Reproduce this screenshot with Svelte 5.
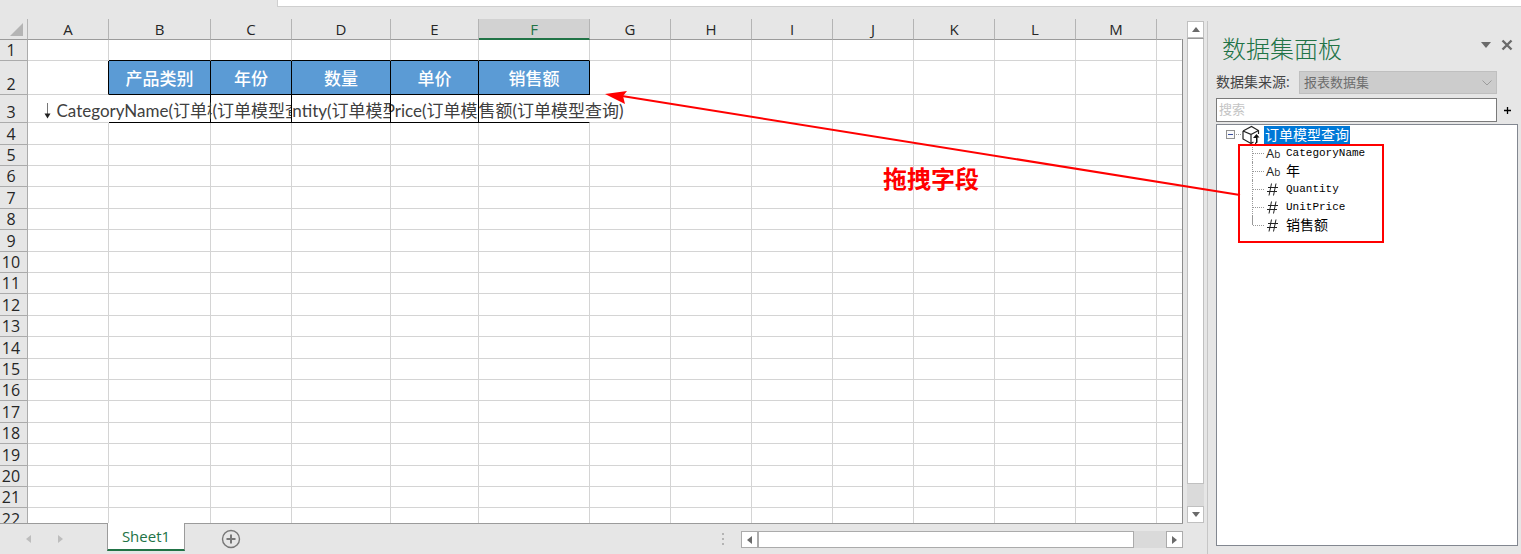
<!--
  App.svelte - Report designer: worksheet with the dataset panel docked on the right
-->
<script lang="ts">
  interface Column {
    name: string;
    width?: number;
  }

  interface Field {
    name: string;
    kind: "text" | "number";
  }

  const columns: Column[] = [
    { name: "A", width: 81 },
    { name: "B", width: 102 },
    { name: "C", width: 81 },
    { name: "D", width: 99 },
    { name: "E", width: 88 },
    { name: "F", width: 111 },
    { name: "G", width: 81 },
    { name: "H", width: 81 },
    { name: "I", width: 81 },
    { name: "J", width: 81 },
    { name: "K", width: 81 },
    { name: "L", width: 81 },
    { name: "M", width: 81 },
    { name: "" },
  ];

  const rowHeights = [
    21, 34, 28, 22, 21, 21, 22, 21, 22, 21, 21, 22, 21, 22, 21, 21, 22, 21, 22,
    21, 21, 22,
  ];

  const titles: Record<string, string> = {
    B: "产品类别",
    C: "年份",
    D: "数量",
    E: "单价",
    F: "销售额",
  };

  const bindings: Record<string, string> = {
    B: "CategoryName",
    C: "年",
    D: "Quantity",
    E: "UnitPrice",
    F: "销售额",
  };

  const fields: Field[] = [
    { name: "CategoryName", kind: "text" },
    { name: "年", kind: "text" },
    { name: "Quantity", kind: "number" },
    { name: "UnitPrice", kind: "number" },
    { name: "销售额", kind: "number" },
  ];

  const model = "订单模型查询";

  let selected = $state("F");
  let expanded = $state(true);
  let keyword = $state("");

  const visibleFields = $derived(
    fields.filter((f) => f.name.toLowerCase().includes(keyword.toLowerCase()))
  );
</script>

<div class="app">
  <div class="formula-bar"></div>

  <div class="body">
    <main class="workbook">
      <div class="sheet-area">
        <div class="sheet">
          <table>
            <colgroup>
              <col class="row-head-col" />
              {#each columns as col}
                <col style:width={col.width ? `${col.width}px` : "auto"} />
              {/each}
            </colgroup>
            <thead>
              <tr>
                <th class="corner">
                  <svg width="13" height="13" viewBox="0 0 13 13"><path d="M13 0V13H0Z" /></svg>
                </th>
                {#each columns as col}
                  <th
                    class:selected={col.name === selected}
                    class:rest={!col.name}
                    onclick={() => (selected = col.name || selected)}
                  >{col.name}</th>
                {/each}
              </tr>
            </thead>
            <tbody>
              {#each rowHeights as height, i}
                <tr class="row-{i + 1}" style:height="{height}px">
                  <th scope="row">{i + 1}</th>
                  {#each columns as col}
                    <td class="col-{col.name}" class:bound={col.name in titles}>
                      {#if i === 1 && titles[col.name]}
                        {titles[col.name]}
                      {:else if i === 2 && bindings[col.name]}
                        <div class="binding">
                          <svg width="9" height="18" viewBox="0 0 9 18"><path d="M4.500 1V13" /><path class="tip" d="M1.500 11.500H7.500L4.500 16.500Z" /></svg>
                          <span>{bindings[col.name]}({model})</span>
                        </div>
                      {/if}
                    </td>
                  {/each}
                </tr>
              {/each}
            </tbody>
          </table>
        </div>

        <div class="scroll-v">
          <button aria-label="向上滚动"><svg width="8" height="5" viewBox="0 0 8 5"><path d="M0 5L4 0L8 5Z" /></svg></button>
          <div class="thumb"></div>
          <button aria-label="向下滚动"><svg width="8" height="5" viewBox="0 0 8 5"><path d="M0 0L4 5L8 0Z" /></svg></button>
        </div>
      </div>

      <footer class="tab-bar">
        <div class="tab-nav">
          <button aria-label="上一个"><svg width="5" height="8" viewBox="0 0 5 8"><path d="M5 0V8L0 4Z" /></svg></button>
          <button aria-label="下一个"><svg width="5" height="8" viewBox="0 0 5 8"><path d="M0 0V8L5 4Z" /></svg></button>
        </div>
        <button class="tab">Sheet1</button>
        <button class="add-sheet" aria-label="新工作表">
          <svg width="20" height="20" viewBox="0 0 20 20"><circle cx="10" cy="10" r="8.500" /><path d="M10 5.500V14.500M5.500 10H14.500" /></svg>
        </button>
        <svg class="grip" width="4" height="12" viewBox="0 0 4 12"><path d="M1 0h2v2H1zM1 5h2v2H1zM1 10h2v2H1z" /></svg>
        <div class="scroll-h">
          <button aria-label="向左滚动"><svg width="5" height="8" viewBox="0 0 5 8"><path d="M5 0V8L0 4Z" /></svg></button>
          <div class="thumb"></div>
          <button aria-label="向右滚动"><svg width="5" height="8" viewBox="0 0 5 8"><path d="M0 0V8L5 4Z" /></svg></button>
        </div>
      </footer>
    </main>

    <aside class="panel">
      <header class="panel-header">
        <h1>数据集面板</h1>
        <button aria-label="选项"><svg width="10" height="6" viewBox="0 0 10 6"><path d="M0 0H10L5 6Z" fill="#6a6a6a" /></svg></button>
        <button aria-label="关闭"><svg width="12" height="12" viewBox="0 0 12 12"><path d="M1.500 1.500L10.500 10.500M10.500 1.500L1.500 10.500" stroke="#6a6a6a" stroke-width="2.400" /></svg></button>
      </header>

      <div class="source">
        <label for="source">数据集来源:</label>
        <div class="select-box">
          <select id="source" disabled>
            <option>报表数据集</option>
          </select>
          <svg width="10" height="6" viewBox="0 0 10 6"><path d="M0.500 0.500L5 5L9.500 0.500" /></svg>
        </div>
      </div>

      <div class="search">
        <input type="text" placeholder="搜索" aria-label="搜索" bind:value={keyword} />
        <button aria-label="添加"><svg width="7" height="7" viewBox="0 0 7 7"><path d="M3.500 0V7M0 3.500H7" stroke="#000" stroke-width="1.300" /></svg></button>
      </div>

      <div class="tree">
        <div class="tree-root">
          <button aria-label="展开或折叠" onclick={() => (expanded = !expanded)}>
            <svg width="9" height="9" viewBox="0 0 9 9">
              <rect x="0.500" y="0.500" width="8" height="8" fill="#fafafa" stroke="#919191" />
              <path d="M2 4.500H7" stroke="#3c50a0" />
              {#if !expanded}<path d="M4.500 2V7" stroke="#3c50a0" />{/if}
            </svg>
          </button>
          <span class="dots"></span>
          <svg class="cube" width="20" height="20" viewBox="0 0 20 20">
            <path d="M2 6L10.500 1.500L17.500 5.500V9M2 6V14L10 18.500V9.500L2 6M10 9.500L17.500 5.500M10 18.500L12.500 17" />
            <path class="arrow" d="M12 13L15.500 9L18.500 12.500H16.500V17.500L14 19.500V17.500H15V13Z" />
          </svg>
          <span class="root-name">{model}</span>
        </div>
        {#if expanded}
          <ul>
            {#each visibleFields as field}
              <li>
                {#if field.kind === "text"}
                  <span class="kind">A<small>b</small></span>
                {:else}
                  <svg class="kind" width="13" height="13" viewBox="0 0 13 13"><path d="M5.500 0.500L3 12.500M10 0.500L7.500 12.500M2 4.500H12M1 8.500H11" /></svg>
                {/if}
                <span class="field" class:latin={/^[A-Za-z]/.test(field.name)}>{field.name}</span>
              </li>
            {/each}
          </ul>
        {/if}
      </div>
    </aside>
  </div>

  <!-- Drag hint drawn over the sheet and the panel -->
  <svg class="hint">
    <rect x="1239" y="145" width="144" height="97" />
    <path d="M1240 195L622 96" />
    <path class="head" d="M605 94L627 91L623 96L625 104Z" />
  </svg>
  <strong class="hint-text">拖拽字段</strong>
</div>

<style>
  :global(body) {
    background: #e6e6e6;
  }

  .app {
    position: relative;
    display: flex;
    flex-direction: column;
    box-sizing: border-box;
    height: 100vh;
    min-height: 300px;
    overflow: hidden;
    background: #e6e6e6;
    color: #262626;
    font-family: "Open Sans", "Noto Sans CJK SC", sans-serif;
    font-size: 16px;
  }

  button {
    display: flex;
    align-items: center;
    justify-content: center;
    box-sizing: border-box;
    padding: 0;
    border: none;
    background: none;
    font: inherit;
  }

  .formula-bar {
    height: 6px;
    margin-left: 277px;
    background: #fff;
    border: solid #cfcfcf;
    border-width: 0 0 1px 1px;
    flex: none;
  }

  .body {
    display: flex;
    flex: 1;
    min-height: 0;
  }

  /* Worksheet */
  .workbook {
    display: flex;
    flex-direction: column;
    flex: 1;
    min-width: 0;
    padding-top: 12px;
  }

  .sheet-area {
    display: flex;
    flex: 1;
    min-height: 0;
    gap: 4px;
  }

  .sheet {
    flex: 1;
    min-width: 0;
    overflow: hidden;
    background: linear-gradient(#e6e6e6 20px, #8c8c8c 20px) right / 1px 100% no-repeat;
    padding-right: 1px;
  }

  table {
    width: 100%;
    table-layout: fixed;
    border-collapse: separate;
    border-spacing: 0;
  }

  .row-head-col {
    width: 28px;
  }

  th,
  td {
    box-sizing: border-box;
    padding: 0;
    line-height: 20px;
    white-space: nowrap;
  }

  th {
    font-weight: 400;
  }

  thead th {
    height: 21px;
    font-size: 15px;
    line-height: 18px;
    border-right: 1px solid #b4b4b4;
    border-bottom: 1px solid #9b9b9b;
    cursor: default;
  }

  thead th.rest {
    border-right-color: transparent;
  }

  thead th.selected {
    background: #d2d2d2;
    border-bottom: 2px solid #217346;
    color: #217346;
  }

  .corner svg {
    display: block;
    margin-left: 10px;
    fill: #b4b4b4;
  }

  tbody th {
    padding-right: 5px;
    vertical-align: bottom;
    border-right: 1px solid #ababab;
    border-bottom: 1px solid #ababab;
  }

  td {
    background: #fff;
    border-right: 1px solid #d4d4d4;
    border-bottom: 1px solid #d4d4d4;
    text-align: center;
  }

  td:last-child {
    border-right: none;
  }

  .row-1 .bound,
  .row-3 .bound {
    border-bottom-color: #000;
  }

  .row-2 .bound {
    padding-top: 2px;
    background: #5b9bd5;
    border-color: #000;
    color: #fff;
    font-weight: 500;
    font-size: 17px;
  }

  .row-2 .col-A {
    border-right-color: #000;
  }

  .row-3 .bound {
    position: relative;
    border-right-color: #000;
    overflow: hidden;
  }

  .row-3 .col-A,
  .row-3 .col-F {
    border-right-color: #fff;
  }

  /* Edge cells let their text run over the empty neighbour */
  .row-3 .col-B {
    overflow: visible;
    clip-path: inset(0 0 0 -100px);
  }

  .row-3 .col-F {
    overflow: visible;
    clip-path: inset(0 -100px 0 0);
  }

  .binding {
    display: flex;
    align-items: center;
    justify-content: center;
    gap: 4px;
    padding: 5px 0 0 4px;
    color: #404040;
    font-family: Lato, "Noto Sans CJK SC", sans-serif;
    font-size: 17px;
  }

  .binding svg {
    flex: none;
    stroke: #777;
  }

  .binding .tip {
    fill: #222;
    stroke: none;
  }

  /* Scroll bars */
  .scroll-v,
  .scroll-h {
    display: flex;
    background: #dadada;
    box-sizing: border-box;
  }

  .scroll-v svg,
  .scroll-h svg {
    fill: #6a6a6a;
  }

  .scroll-v {
    flex-direction: column;
    width: 17px;
    margin: 2px 3px 0 0;
  }

  .scroll-v button,
  .scroll-v .thumb {
    width: 17px;
    background: #fff;
    border: 1px solid #c0c0c0;
    box-sizing: border-box;
  }

  .scroll-v button {
    height: 17px;
    flex: none;
  }

  .scroll-v .thumb {
    flex: 1;
    margin-bottom: 22px;
    border-top-color: #999;
  }

  .tab-bar {
    display: flex;
    align-items: flex-start;
    height: 31px;
    margin-right: 24px;
    box-sizing: border-box;
    background: linear-gradient(#9b9b9b, #9b9b9b) top / 100% 1px no-repeat;
    flex: none;
  }

  .tab-nav {
    display: flex;
    gap: 16px;
    width: 87px;
    height: 31px;
    padding-left: 20px;
  }

  .tab-nav button {
    width: 16px;
  }

  .tab-nav svg {
    fill: #bdbdbd;
  }

  .tab {
    width: 78px;
    height: 28px;
    background: #fff;
    border: solid #9b9b9b;
    border-width: 0 1px;
    border-bottom: 2px solid #217346;
    color: #217346;
    font-size: 15px;
  }

  .add-sheet {
    margin: 6px auto 0 36px;
  }

  .add-sheet svg {
    fill: none;
    stroke: #777;
    stroke-width: 1.400;
  }

  .add-sheet path {
    stroke-width: 2;
  }

  .grip {
    margin: 10px 16px 0 0;
    fill: #b4b4b4;
  }

  .scroll-h {
    width: 442px;
    height: 17px;
    margin-top: 8px;
  }

  .scroll-h button,
  .scroll-h .thumb {
    background: #fff;
    border: 1px solid #ababab;
    height: 17px;
    box-sizing: border-box;
  }

  .scroll-h button {
    width: 17px;
  }

  .scroll-h .thumb {
    flex: 1;
    margin-right: 32px;
  }

  /* Dataset panel */
  .panel {
    display: flex;
    flex-direction: column;
    box-sizing: border-box;
    width: 314px;
    margin-top: 14px;
    padding: 12px 3px 8px 8px;
    border-left: 1px solid #c6c6c6;
  }

  .panel-header {
    display: flex;
    align-items: flex-start;
    gap: 10px;
    padding: 0 5px 0 6px;
    height: 32px;
  }

  .panel-header button {
    height: 24px;
  }

  h1 {
    flex: 1;
    margin: 0;
    font-size: 24px;
    line-height: 32px;
    font-weight: 300;
    color: #217346;
  }

  .source {
    display: flex;
    align-items: center;
    justify-content: space-between;
    margin: 6px 21px 0 0;
    color: #444;
    font-size: 14px;
  }

  .source label {
    line-height: 20px;
    padding-bottom: 2px;
  }

  .select-box {
    position: relative;
    width: 198px;
  }

  select {
    display: block;
    width: 100%;
    height: 23px;
    padding: 0 4px 2px;
    appearance: none;
    background: #ccc;
    border: 1px solid #bfbfbf;
    border-radius: 0;
    color: #6d6d6d;
    font: inherit;
    font-size: 13px;
    line-height: 20px;
    opacity: 1;
  }

  .select-box svg {
    position: absolute;
    right: 5px;
    top: 9px;
    fill: none;
    stroke: #9b9b9b;
  }

  .search {
    display: flex;
    gap: 7px;
    margin-top: 4px;
  }

  .search input {
    width: 281px;
    height: 24px;
    box-sizing: border-box;
    padding: 0 2px 2px;
    background: #fff;
    border: 1px solid #7a7a7a;
    font: inherit;
    font-size: 13px;
  }

  .search input::placeholder {
    color: #c4c4c4;
  }

  .tree {
    flex: 1;
    min-height: 0;
    overflow: hidden;
    margin-top: 2px;
    border: 1px solid #828790;
    background: #fff;
    color: #000;
    font-size: 14px;
  }

  .tree-root {
    display: flex;
    align-items: center;
    height: 19px;
    padding-left: 9px;
  }

  .dots {
    width: 5px;
    margin-left: 1px;
    border-top: 1px dotted #999;
  }

  .cube {
    margin-right: 3px;
    fill: none;
    stroke: #222;
    stroke-width: 1.200;
  }

  .cube .arrow {
    fill: #111;
    stroke: none;
  }

  .root-name {
    padding: 0 1px;
    background: #0078d7;
    color: #fff;
    line-height: 18px;
  }

  ul {
    margin: 0 0 0 35px;
    padding: 0;
    list-style: none;
  }

  li {
    display: flex;
    align-items: center;
    height: 18px;
    background: linear-gradient(90deg, #999 50%, transparent 50%) 0 9px / 2px 1px repeat-x;
    border-left: 1px dotted #999;
    line-height: 18px;
  }

  li:last-child {
    border-image: linear-gradient(#999 50%, transparent 50%) 1;
  }

  .kind {
    width: 17px;
    height: 18px;
    margin-left: 11px;
    padding: 0 3px 0 2px;
    background: #fff;
    font-size: 13px;
    color: #222;
    flex: none;
  }

  .kind small {
    font-size: 10px;
  }

  svg.kind {
    width: 13px;
    height: 13px;
    padding: 0 7px 0 2px;
    fill: none;
    stroke: #222;
  }

  .field {
    flex: 1;
    background: #fff;
  }

  .field.latin {
    font-family: "Liberation Mono", monospace;
    font-size: 11px;
  }

  /* Drag hint */
  .hint {
    position: absolute;
    inset: 0;
    width: 100%;
    height: 100%;
    fill: none;
    stroke: #f00;
    stroke-width: 2;
    pointer-events: none;
  }

  .hint .head {
    fill: #f00;
    stroke: none;
  }

  .hint-text {
    position: absolute;
    left: 883px;
    top: 161px;
    color: #f00;
    font-size: 24px;
    line-height: 36px;
    font-weight: 700;
  }
</style>
